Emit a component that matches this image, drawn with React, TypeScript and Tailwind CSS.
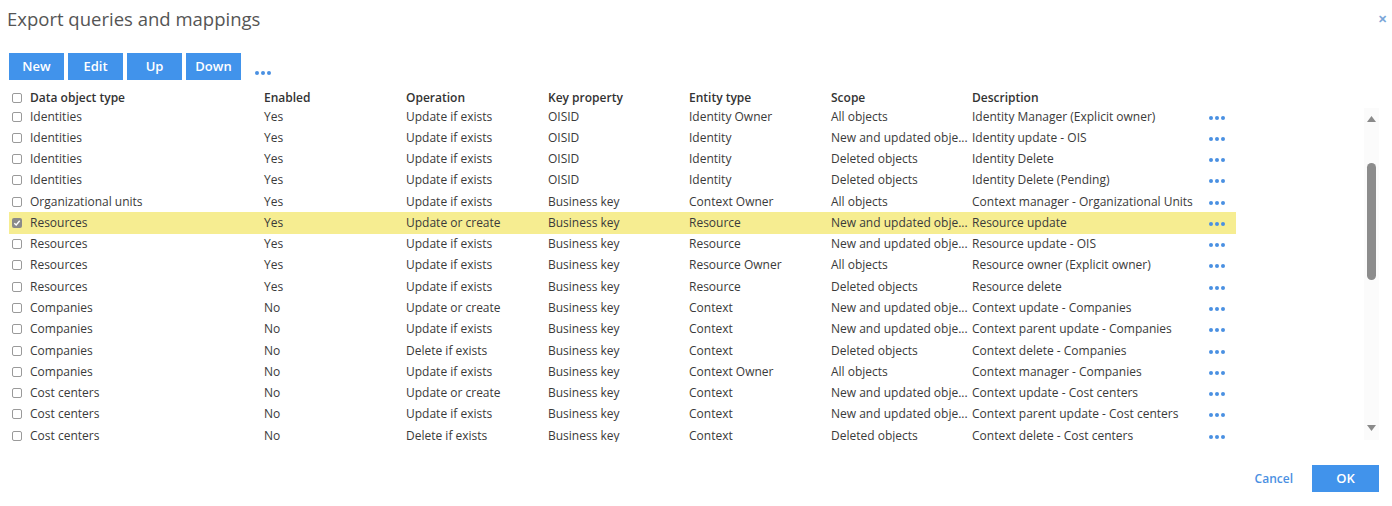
import React from "react";

type Row = [string, string, string, string, string, string, string];

const NU = "New and updated obje...";

const rows: Row[] = [
  ["Identities", "Yes", "Update if exists", "OISID", "Identity Owner", "All objects", "Identity Manager (Explicit owner)"],
  ["Identities", "Yes", "Update if exists", "OISID", "Identity", NU, "Identity update - OIS"],
  ["Identities", "Yes", "Update if exists", "OISID", "Identity", "Deleted objects", "Identity Delete"],
  ["Identities", "Yes", "Update if exists", "OISID", "Identity", "Deleted objects", "Identity Delete (Pending)"],
  ["Organizational units", "Yes", "Update if exists", "Business key", "Context Owner", "All objects", "Context manager - Organizational Units"],
  ["Resources", "Yes", "Update or create", "Business key", "Resource", NU, "Resource update"],
  ["Resources", "Yes", "Update if exists", "Business key", "Resource", NU, "Resource update - OIS"],
  ["Resources", "Yes", "Update if exists", "Business key", "Resource Owner", "All objects", "Resource owner (Explicit owner)"],
  ["Resources", "Yes", "Update if exists", "Business key", "Resource", "Deleted objects", "Resource delete"],
  ["Companies", "No", "Update or create", "Business key", "Context", NU, "Context update - Companies"],
  ["Companies", "No", "Update if exists", "Business key", "Context", NU, "Context parent update - Companies"],
  ["Companies", "No", "Delete if exists", "Business key", "Context", "Deleted objects", "Context delete - Companies"],
  ["Companies", "No", "Update if exists", "Business key", "Context Owner", "All objects", "Context manager - Companies"],
  ["Cost centers", "No", "Update or create", "Business key", "Context", NU, "Context update - Cost centers"],
  ["Cost centers", "No", "Update if exists", "Business key", "Context", NU, "Context parent update - Cost centers"],
  ["Cost centers", "No", "Delete if exists", "Business key", "Context", "Deleted objects", "Context delete - Cost centers"],
];

const Dots = () => (
  <div className="flex items-center gap-[2px]">
    <span className="block w-[4px] h-[4px] rounded-full bg-[#4a90e2]" />
    <span className="block w-[4px] h-[4px] rounded-full bg-[#4a90e2]" />
    <span className="block w-[4px] h-[4px] rounded-full bg-[#4a90e2]" />
  </div>
);

const Checkbox = ({ checked = false }: { checked?: boolean }) =>
  checked ? (
    <span className="flex items-center justify-center w-[10px] h-[10px] rounded-[2px] bg-[#8a8a8a]">
      <svg width="8" height="8" viewBox="0 0 8 8">
        <path d="M1.3 4.2 L3.2 6 L6.7 1.8" stroke="white" strokeWidth="1.4" fill="none" />
      </svg>
    </span>
  ) : (
    <span className="block w-[10px] h-[10px] rounded-[2px] border border-[#9a9a9a] bg-white" />
  );

const colW = ["w-[234px]", "w-[142px]", "w-[142px]", "w-[141px]", "w-[142px]", "w-[141px]", "w-[231px]"];

export default function App() {
  return (
    <div
      className="relative w-[1392px] h-[506px] bg-white text-[#3a3a3a] overflow-hidden"
      style={{ fontFamily: '"Open Sans", "Noto Sans", sans-serif' }}
    >
      {/* Title bar */}
      <div className="flex items-start justify-between pl-[7px] pr-[5px] pt-[6px] h-[53px]">
        <h1 className="text-[18.5px] leading-[26px] text-[#555555]">Export queries and mappings</h1>
        <span className="text-[#7aa6d8] text-[11px] font-bold leading-[26px]">✕</span>
      </div>

      {/* Toolbar */}
      <div className="flex items-center pl-[9px] gap-[4px] h-[27px]">
        {["New", "Edit", "Up", "Down"].map((b) => (
          <button
            key={b}
            className="w-[55px] h-[27px] bg-[#4193eb] text-white text-[13px] font-semibold flex items-center justify-center"
          >
            {b}
          </button>
        ))}
        <div className="ml-[10px] mt-[12px]">
          <Dots />
        </div>
      </div>

      {/* Table */}
      <div className="flex pl-[9px] mt-[9px]">
        <div className="w-[1240px] text-[12px]">
          {/* header */}
          <div className="flex items-center h-[17px] font-semibold text-[#333]">
            <div className="w-[21px] pl-[3px] flex items-center">
              <Checkbox />
            </div>
            <div className={colW[0]}>Data object type</div>
            <div className={colW[1]}>Enabled</div>
            <div className={colW[2]}>Operation</div>
            <div className={colW[3]}>Key property</div>
            <div className={colW[4]}>Entity type</div>
            <div className={colW[5]}>Scope</div>
            <div className={colW[6]}>Description</div>
          </div>
          <div className="h-[336px] overflow-hidden">
            {rows.map((r, i) => {
              const sel = i === 5;
              return (
                <div
                  key={i}
                  className={`flex items-center h-[21.27px] w-[1227px] whitespace-nowrap ${sel ? "bg-[#f6ed91]" : ""}`}
                >
                  <div className="w-[21px] pl-[3px] flex items-center">
                    <Checkbox checked={sel} />
                  </div>
                  {r.map((c, j) => (
                    <div key={j} className={colW[j]}>
                      {c}
                    </div>
                  ))}
                  <div className="ml-[6px] mt-[2px]">
                    <Dots />
                  </div>
                </div>
              );
            })}
          </div>
        </div>

        {/* scrollbar */}
        <div className="ml-[115px] mt-[19px] w-[15px] h-[332px] bg-[#fbfbfb] flex flex-col items-center pt-[8px] pb-[9px]">
          <svg width="9" height="6" viewBox="0 0 9 6">
            <path d="M4.5 0 L9 6 L0 6 Z" fill="#8a8a8a" />
          </svg>
          <div className="flex-1 w-full flex flex-col items-center pt-[41px]">
            <div className="w-[9px] h-[117px] rounded-full bg-[#8c8c8c]" />
          </div>
          <svg width="9" height="6" viewBox="0 0 9 6">
            <path d="M0 0 L9 0 L4.5 6 Z" fill="#8a8a8a" />
          </svg>
        </div>
      </div>

      {/* Footer */}
      <div className="flex items-center justify-end pr-[13px] mt-[23px] gap-[19px]">
        <span className="text-[12px] font-semibold text-[#4a90e2]">Cancel</span>
        <button className="w-[67px] h-[27px] bg-[#4193eb] text-white text-[13px] font-semibold flex items-center justify-center">
          OK
        </button>
      </div>
    </div>
  );
}
